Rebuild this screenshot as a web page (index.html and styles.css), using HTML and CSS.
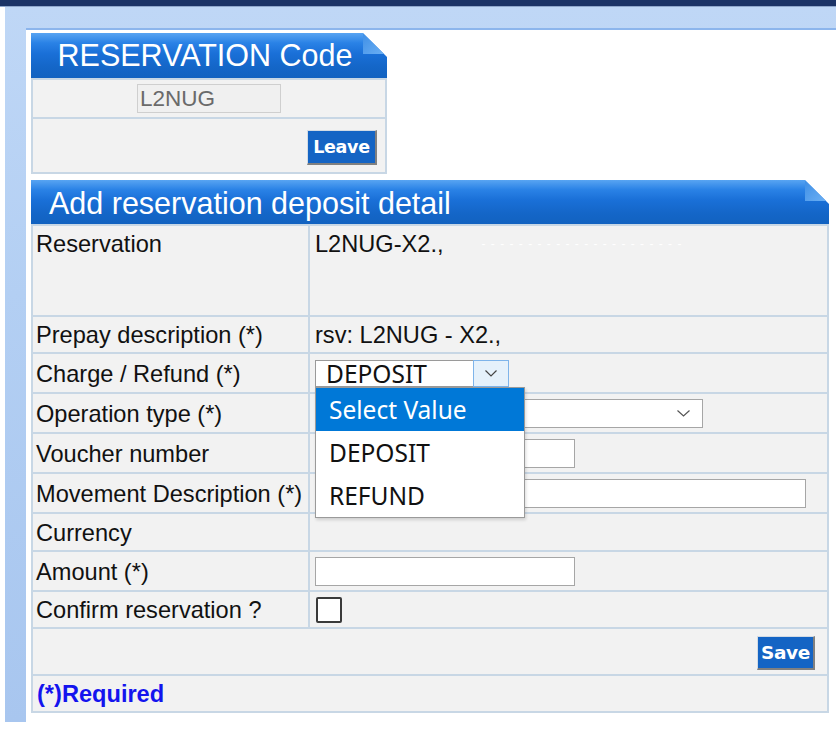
FILE: index.html
```html
<!DOCTYPE html>
<html lang="en">
<head>
    <meta charset="UTF-8">
    <meta name="viewport" content="width=device-width, initial-scale=1.0">
    <title>Add reservation deposit detail</title>
    <link rel="stylesheet" href="styles.css">
</head>
<body>
    <div class="topbar"></div>
    <div class="frame">
        <div class="main">
            <section class="panel panel-code">
                <h2 class="panel-head">RESERVATION Code</h2>
                <div class="code-body">
                    <div class="cell cell-center">
                        <input class="code-input" type="text" value="L2NUG" disabled>
                    </div>
                    <div class="cell cell-right cell-leave">
                        <button class="btn" type="button">Leave</button>
                    </div>
                </div>
            </section>

            <section class="panel panel-detail">
                <h2 class="panel-head">Add reservation deposit detail</h2>
                <div class="form-grid">
                    <div class="cell label top">Reservation</div>
                    <div class="cell value top">L2NUG-X2.,<span class="ghost">- - - - - - - - - - - - - - - - - - - - - -</span></div>

                    <div class="cell label">Prepay description (*)</div>
                    <div class="cell value">rsv: L2NUG - X2.,</div>

                    <div class="cell label">Charge / Refund (*)</div>
                    <div class="cell value">
                        <div class="select select-charge open">
                            <span class="select-text">DEPOSIT</span>
                            <span class="select-arrow">
                                <svg width="12" height="7" viewBox="0 0 12 7"><path d="M0.5 0.5 L6 6 L11.5 0.5" fill="none" stroke="#444" stroke-width="1.2"/></svg>
                            </span>
                            <ul class="dropdown">
                                <li class="selected">Select Value</li>
                                <li>DEPOSIT</li>
                                <li>REFUND</li>
                            </ul>
                        </div>
                    </div>

                    <div class="cell label">Operation type (*)</div>
                    <div class="cell value">
                        <div class="select select-operation">
                            <span class="select-text"></span>
                            <span class="select-arrow plain">
                                <svg width="13" height="7" viewBox="0 0 13 7"><path d="M0.5 0.5 L6.5 6 L12.5 0.5" fill="none" stroke="#555" stroke-width="1.2"/></svg>
                            </span>
                        </div>
                    </div>

                    <div class="cell label">Voucher number</div>
                    <div class="cell value"><input class="field field-short" type="text"></div>

                    <div class="cell label">Movement Description (*)</div>
                    <div class="cell value"><input class="field field-long" type="text"></div>

                    <div class="cell label">Currency</div>
                    <div class="cell value"></div>

                    <div class="cell label">Amount (*)</div>
                    <div class="cell value"><input class="field field-short" type="text"></div>

                    <div class="cell label">Confirm reservation ?</div>
                    <div class="cell value"><span class="checkbox"></span></div>

                    <div class="cell wide cell-right cell-save">
                        <button class="btn btn-save" type="button">Save</button>
                    </div>

                    <div class="cell wide required">(*)Required</div>
                </div>
            </section>
        </div>
    </div>
</body>
</html>
```

FILE: styles.css
```css
body {
    margin: 0;
    background: #ffffff;
    font-family: "Liberation Sans", Arial, sans-serif;
    color: #111111;
}
.topbar {
    height: 6px;
    background: #1b3366;
    border-bottom: 1px solid #8fa7cc;
}
.frame {
    margin-left: 5px;
    padding: 21px 0 0 21px;
    background: linear-gradient(180deg, #bfd7f6 0%, #b3cff3 40%, #a8c6ef 100%);
}
.main {
    background: #ffffff;
    border-top: 2px solid #8cb5ec;
    padding: 3px 0 9px 5px;
}

/* Panels with the blue folded header */
.panel-code {
    width: 356px;
}
.panel-detail {
    width: 798px;
    margin-top: 6px;
}
.panel-head {
    position: relative;
    margin: 0;
    height: 45px;
    line-height: 45px;
    font-size: 30.5px;
    font-weight: normal;
    color: #ffffff;
    background: linear-gradient(180deg, #58a4f2 0%, #2a82e6 22%, #1a70d8 45%, #1466c8 75%, #1262c0 100%);
    clip-path: polygon(0 0, calc(100% - 24px) 0, 100% 24px, 100% 100%, 0 100%);
}
.panel-head::after {
    content: "";
    position: absolute;
    top: 0;
    right: 2px;
    width: 22px;
    height: 21px;
    background: linear-gradient(135deg, #3f8fe6 0%, #6cb0f4 100%);
    clip-path: polygon(0 0, 100% 100%, 0 100%);
}
.panel-code .panel-head {
    text-align: center;
    padding-right: 8px;
}
.panel-detail .panel-head {
    height: 44px;
    line-height: 46px;
    padding-left: 18px;
}

.code-body {
    display: grid;
    grid-template-rows: 37px 53px;
    gap: 2px;
    padding: 2px;
    background: #c8d7e5;
}
.cell {
    background: #f2f2f2;
    display: flex;
    align-items: center;
}
.cell-center {
    justify-content: center;
}
.cell-right {
    justify-content: flex-end;
}
.cell-leave {
    padding: 4px 8px 0 0;
}
.code-input {
    box-sizing: border-box;
    width: 144px;
    height: 29px;
    margin: 0;
    padding: 0 2px;
    border: 1px solid #cfcfcf;
    background: #f0f0f0;
    color: #6a6a6a;
    font-family: "Liberation Sans", Arial, sans-serif;
    font-size: 22.5px;
}

.btn {
    margin: 0;
    padding: 0;
    width: 70px;
    height: 35px;
    background: #1464c4;
    color: #ffffff;
    font-family: "DejaVu Sans", Verdana, sans-serif;
    font-weight: bold;
    font-size: 17.5px;
    letter-spacing: -0.3px;
    border-style: solid;
    border-width: 1px 2px 2px 1px;
    border-color: #d3dbe4 #808080 #808080 #d3dbe4;
}
.btn-save {
    width: 58px;
    height: 34px;
    font-size: 18.5px;
}

/* Detail form */
.form-grid {
    display: grid;
    grid-template-columns: 275px 1fr;
    grid-template-rows: 89px 35px 38px 38px 38px 38px 36px 38px 35px 45px 35px;
    gap: 2px;
    padding: 2px;
    background: #c8d7e5;
    font-size: 23.6px;
    line-height: 27px;
    white-space: nowrap;
}
.label {
    padding: 2px 3px 0;
}
.value {
    padding: 2px 5px 0;
}
.top {
    align-items: flex-start;
    padding-top: 5px;
}
.ghost {
    margin-left: 38px;
    color: #ffffff;
    font-size: 12px;
    letter-spacing: 1px;
}
.wide {
    grid-column: 1 / 3;
}
.cell-save {
    padding: 2px 12px 0 0;
}
.required {
    padding: 2px 4px 0;
    color: #1414ee;
    font-weight: bold;
}

.field {
    box-sizing: border-box;
    height: 29px;
    margin: 0;
    border: 1px solid #a6a6a6;
    background: #ffffff;
    font-size: 20px;
}
.value .field {
    margin-top: -2px;
}
.field-short {
    width: 260px;
}
.field-long {
    width: 491px;
}
.checkbox {
    box-sizing: border-box;
    width: 26px;
    height: 26px;
    margin: -2px 0 0 1px;
    border: 2px solid #3a3a3a;
    border-radius: 2px;
    background: #ffffff;
}

/* Select boxes */
.select {
    position: relative;
    box-sizing: border-box;
    display: flex;
    align-items: center;
    background: #ffffff;
    font-family: "Noto Sans", "Open Sans", sans-serif;
    font-size: 24.5px;
    color: #111111;
}
.select-charge {
    width: 194px;
    height: 27px;
    margin-top: -1px;
    border: 1px solid #9a9a9a;
    border-right: none;
}
.select-operation {
    width: 388px;
    height: 29px;
    margin-top: -2px;
    border: 1px solid #a6a6a6;
}
.select-text {
    flex: 1;
    padding-left: 10px;
    line-height: 25px;
}
.select-arrow {
    box-sizing: border-box;
    width: 36px;
    height: 27px;
    margin-top: -1px;
    margin-bottom: -1px;
    display: flex;
    align-items: center;
    justify-content: center;
    background: #e5f1fb;
    border: 1px solid #7eb4ea;
}
.select-arrow.plain {
    width: 30px;
    margin: 0 4px 0 0;
    background: transparent;
    border: none;
}
.dropdown {
    position: absolute;
    top: 100%;
    left: -1px;
    z-index: 5;
    width: 208px;
    margin: 1px 0 0;
    padding: 0;
    list-style: none;
    background: #ffffff;
    border: 1px solid #9a9a9a;
    box-shadow: 1px 2px 3px rgba(0, 0, 0, 0.15);
}
.dropdown li {
    height: 43px;
    line-height: 43px;
    padding-left: 13px;
}
.dropdown li.selected {
    background: #0078d7;
    color: #ffffff;
}
```
